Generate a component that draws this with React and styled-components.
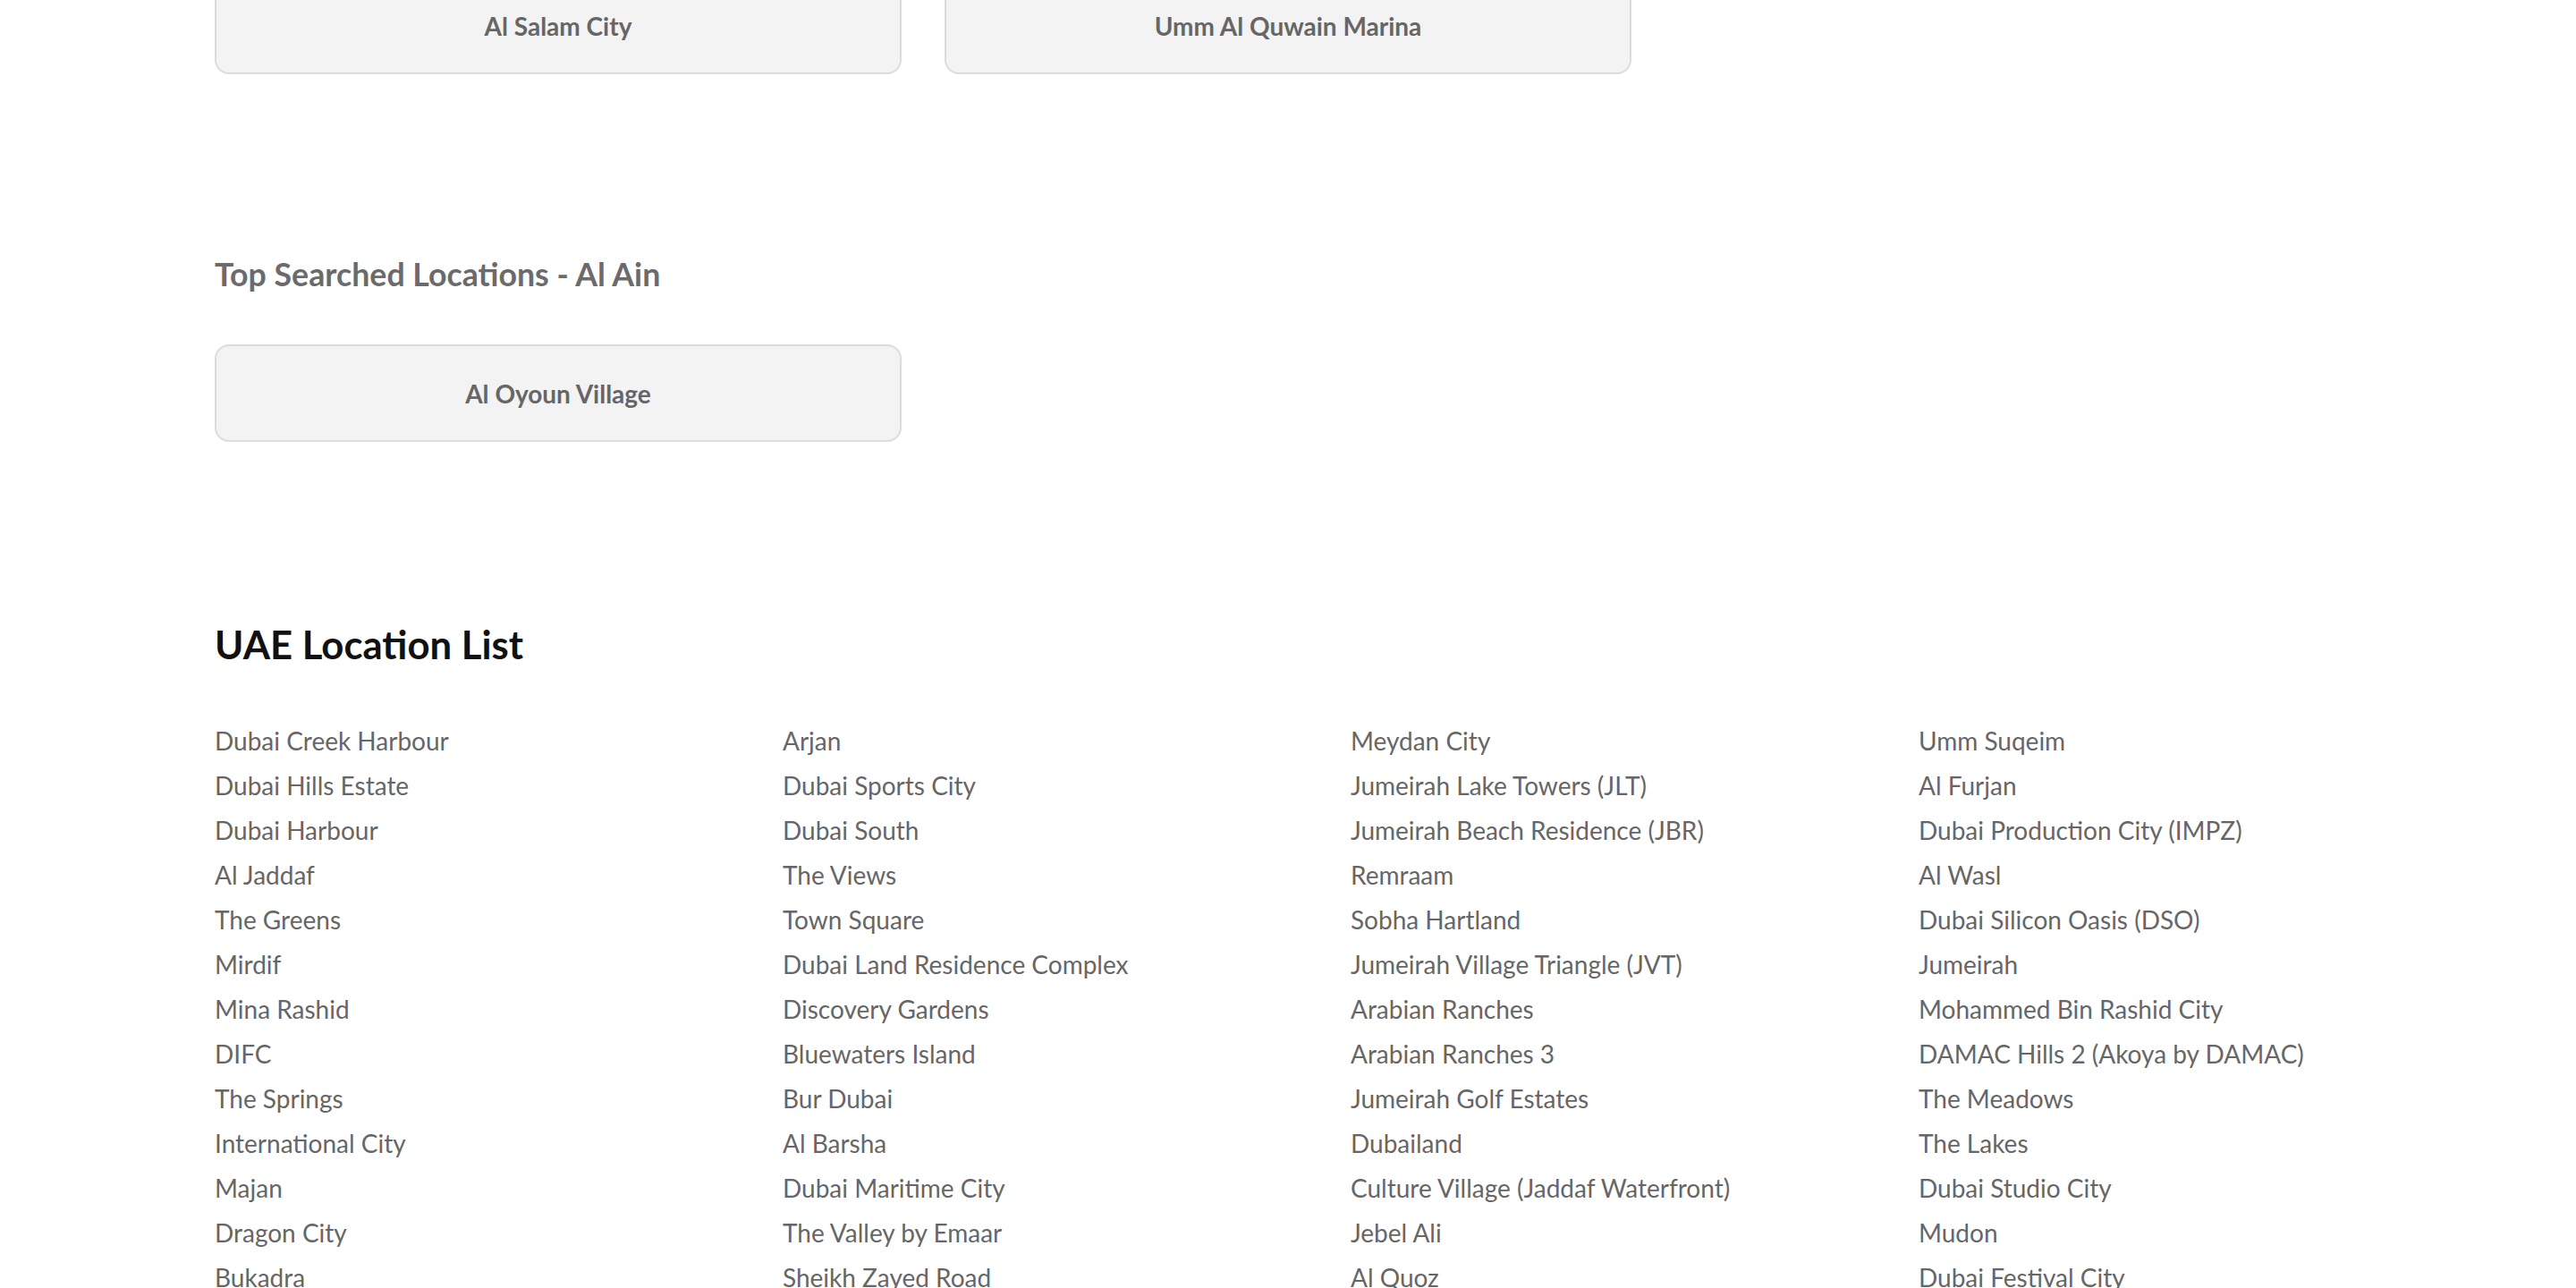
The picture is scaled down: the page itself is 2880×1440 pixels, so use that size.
import React from "react";
import styled, { createGlobalStyle } from "styled-components";

const GlobalStyle = createGlobalStyle`
  html, body {
    margin: 0;
    padding: 0;
    background: #ffffff;
    font-family: Lato, "Open Sans", Arial, sans-serif;
  }
`;

const emirateCards = ["Al Salam City", "Umm Al Quwain Marina"];
const alAinCards = ["Al Oyoun Village"];

const locationColumns = [
    [
        "Dubai Creek Harbour",
        "Dubai Hills Estate",
        "Dubai Harbour",
        "Al Jaddaf",
        "The Greens",
        "Mirdif",
        "Mina Rashid",
        "DIFC",
        "The Springs",
        "International City",
        "Majan",
        "Dragon City",
        "Bukadra",
    ],
    [
        "Arjan",
        "Dubai Sports City",
        "Dubai South",
        "The Views",
        "Town Square",
        "Dubai Land Residence Complex",
        "Discovery Gardens",
        "Bluewaters Island",
        "Bur Dubai",
        "Al Barsha",
        "Dubai Maritime City",
        "The Valley by Emaar",
        "Sheikh Zayed Road",
    ],
    [
        "Meydan City",
        "Jumeirah Lake Towers (JLT)",
        "Jumeirah Beach Residence (JBR)",
        "Remraam",
        "Sobha Hartland",
        "Jumeirah Village Triangle (JVT)",
        "Arabian Ranches",
        "Arabian Ranches 3",
        "Jumeirah Golf Estates",
        "Dubailand",
        "Culture Village (Jaddaf Waterfront)",
        "Jebel Ali",
        "Al Quoz",
    ],
    [
        "Umm Suqeim",
        "Al Furjan",
        "Dubai Production City (IMPZ)",
        "Al Wasl",
        "Dubai Silicon Oasis (DSO)",
        "Jumeirah",
        "Mohammed Bin Rashid City",
        "DAMAC Hills 2 (Akoya by DAMAC)",
        "The Meadows",
        "The Lakes",
        "Dubai Studio City",
        "Mudon",
        "Dubai Festival City",
    ],
];

export default function App() {
    return (
        <>
            <GlobalStyle />
            <Page>
                <CardGrid $offset="-26px">
                    {emirateCards.map((name) => (
                        <LocationCard key={name}>{name}</LocationCard>
                    ))}
                </CardGrid>

                <SectionTitle>Top Searched Locations - Al Ain</SectionTitle>
                <CardGrid $offset="56px">
                    {alAinCards.map((name) => (
                        <LocationCard key={name}>{name}</LocationCard>
                    ))}
                </CardGrid>

                <ListTitle>UAE Location List</ListTitle>
                <LocationList>
                    {locationColumns.map((col, i) => (
                        <Column key={i}>
                            {col.map((loc) => (
                                <Item key={loc}>{loc}</Item>
                            ))}
                        </Column>
                    ))}
                </LocationList>
            </Page>
        </>
    );
}

const Page = styled.div`
    width: 2400px;
    margin: 0 auto;
    padding: 0 240px 120px;
    box-sizing: content-box;
`;

const CardGrid = styled.div`
    display: grid;
    grid-template-columns: repeat(3, 1fr);
    gap: 48px;
    margin-top: ${(p) => p.$offset};
`;

const LocationCard = styled.div`
    height: 109px;
    box-sizing: border-box;
    display: flex;
    align-items: center;
    justify-content: center;
    background: #f3f3f3;
    border: 2px solid #dcdcdc;
    border-radius: 16px;
    color: #666666;
    font-size: 28px;
    font-weight: 700;
    cursor: pointer;
`;

const SectionTitle = styled.h2`
    margin: 202px 0 0;
    height: 44px;
    line-height: 44px;
    font-size: 35.7px;
    font-weight: 700;
    color: #6b6b6b;
`;

const ListTitle = styled.h2`
    margin: 198px 0 0;
    height: 56px;
    line-height: 56px;
    font-size: 43.7px;
    font-weight: 700;
    color: #111111;
`;

const LocationList = styled.div`
    display: grid;
    grid-template-columns: repeat(4, 1fr);
    column-gap: 140px;
    margin-top: 55px;
`;

const Column = styled.ul`
    list-style: none;
    margin: 0;
    padding: 0;
`;

const Item = styled.li`
    height: 50px;
    line-height: 50px;
    font-size: 28px;
    color: #666666;
    white-space: nowrap;
`;
